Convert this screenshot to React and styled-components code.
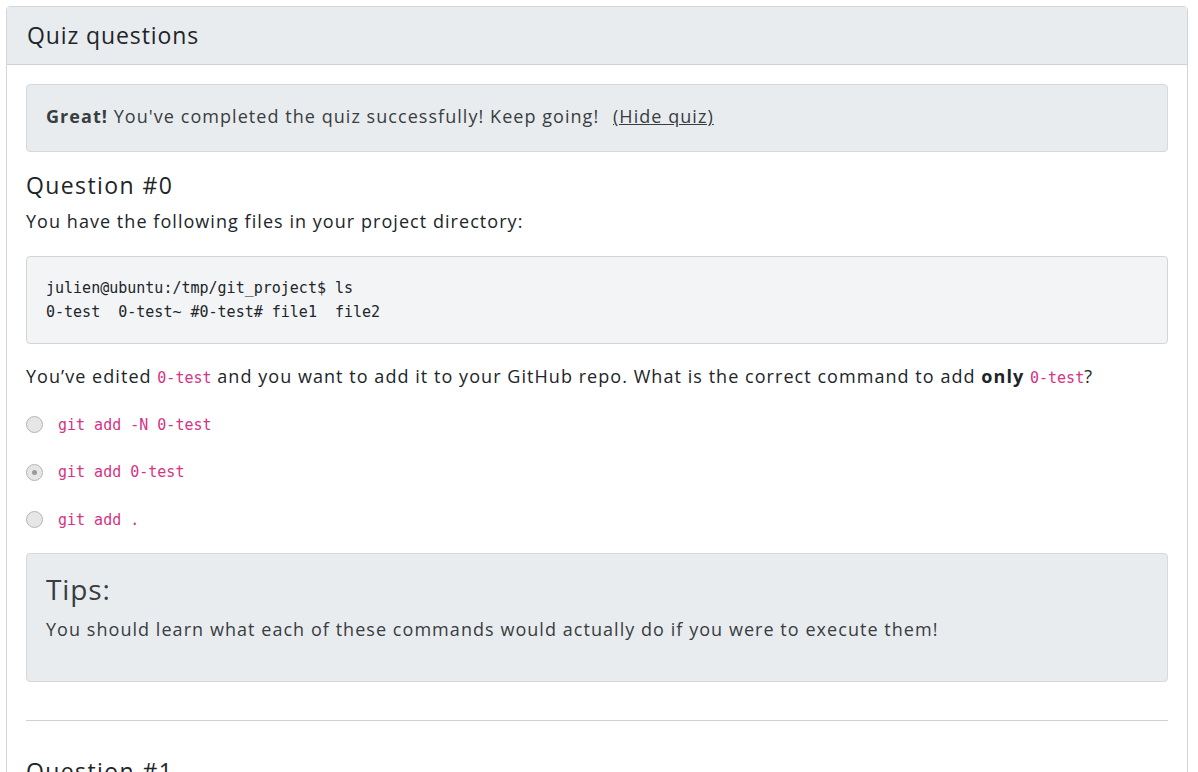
import React from "react";
import styled, { createGlobalStyle } from "styled-components";

const GlobalStyle = createGlobalStyle`
  body {
    margin: 0;
    background: #fff;
    font-family: "Open Sans", "Noto Sans", sans-serif;
    color: #212529;
  }
`;

const answers = [
  { id: 0, text: "git add -N 0-test", checked: false },
  { id: 1, text: "git add 0-test", checked: true },
  { id: 2, text: "git add .", checked: false },
];

function App() {
  return (
    <>
      <GlobalStyle />
      <Page>
        <Card>
          <CardHeader>Quiz questions</CardHeader>
          <CardBody>
            <Alert>
              <strong>Great!</strong> You've completed the quiz successfully! Keep going!{" "}
              <HideLink>(Hide quiz)</HideLink>
            </Alert>

            <QuestionTitle>Question #0</QuestionTitle>
            <Paragraph>You have the following files in your project directory:</Paragraph>
            <Pre>
              {"julien@ubuntu:/tmp/git_project$ ls\n0-test  0-test~ #0-test# file1  file2"}
            </Pre>
            <Paragraph>
              You’ve edited <Code>0-test</Code> and you want to add it to your GitHub repo. What is the
              correct command to add <strong>only</strong> <Code>0-test</Code>?
            </Paragraph>

            <AnswerList>
              {answers.map((a) => (
                <Answer key={a.id}>
                  <Radio checked={a.checked} />
                  <Code>{a.text}</Code>
                </Answer>
              ))}
            </AnswerList>

            <Tips>
              <TipsTitle>Tips:</TipsTitle>
              <TipsText>
                You should learn what each of these commands would actually do if you were to execute them!
              </TipsText>
            </Tips>

            <Divider />

            <QuestionTitle>Question #1</QuestionTitle>
            <Paragraph>Something more to read below.</Paragraph>
          </CardBody>
        </Card>
      </Page>
    </>
  );
}

const Page = styled.div`
  padding: 6px 10px 0 6px;
`;

const Card = styled.div`
  border: 1px solid #d3d5d8;
  border-radius: 4px;
  background: #fff;
`;

const CardHeader = styled.div`
  background: #e9ecef;
  border-bottom: 1px solid #cfd2d5;
  padding: 0 20px 2px;
  height: 55px;
  display: flex;
  align-items: center;
  font-size: 23px;
  font-weight: 500;
  letter-spacing: 0.9px;
  color: #212529;
`;

const CardBody = styled.div`
  padding: 19px 19px 20px 19px;
`;

const Alert = styled.div`
  background: #e9ecef;
  border: 1px solid #d6d8db;
  border-radius: 4px;
  padding: 0 19px 4px;
  height: 62px;
  display: flex;
  align-items: center;
  white-space: pre;
  font-size: 18px;
  letter-spacing: 1.05px;
  color: #383d41;
  strong {
    font-weight: 700;
  }
`;

const HideLink = styled.a`
  margin-left: 8px;
  text-decoration: underline;
  color: #383d41;
  cursor: pointer;
`;

const QuestionTitle = styled.h4`
  margin: 19px 0 8px;
  font-size: 23px;
  font-weight: 500;
  letter-spacing: 1.4px;
  line-height: 28px;
`;

const Paragraph = styled.p`
  margin: 0 0 21px;
  font-size: 18px;
  letter-spacing: 1.05px;
  line-height: 28px;
  strong {
    font-weight: 700;
  }
`;

const Pre = styled.pre`
  margin: 0 0 18px;
  background: #f3f4f6;
  border: 1px solid #d3d5d8;
  border-radius: 4px;
  padding: 19px;
  font-family: "DejaVu Sans Mono", "Liberation Mono", monospace;
  font-size: 15px;
  letter-spacing: 0;
  line-height: 24px;
  color: #212529;
`;

const Code = styled.code`
  font-family: "DejaVu Sans Mono", "Liberation Mono", monospace;
  font-size: 15px;
  letter-spacing: 0;
  color: #d63384;
`;

const AnswerList = styled.div`
  display: flex;
  flex-direction: column;
  margin: -12px 0 9px;
`;

const Answer = styled.label`
  display: flex;
  align-items: center;
  gap: 15px;
  height: 47.5px;
`;

const Radio = styled.span`
  width: 15px;
  height: 15px;
  border-radius: 50%;
  border: 1px solid #b5b5b5;
  background: #e6e6e6;
  display: flex;
  align-items: center;
  justify-content: center;
  &::after {
    content: "";
    width: 5px;
    height: 5px;
    border-radius: 50%;
    background: ${(p) => (p.checked ? "#9a9a9a" : "transparent")};
  }
`;

const Tips = styled.div`
  background: #e9ecef;
  border: 1px solid #d6d8db;
  border-radius: 4px;
  padding: 15px 19px 0;
  height: 129px;
  box-sizing: border-box;
  color: #383d41;
`;

const TipsTitle = styled.h3`
  margin: 0 0 6px;
  font-size: 28px;
  font-weight: 400;
  letter-spacing: 0.9px;
  line-height: 40px;
`;

const TipsText = styled.p`
  margin: 0;
  font-size: 18px;
  letter-spacing: 1.05px;
  line-height: 28px;
`;

const Divider = styled.hr`
  margin: 38px 0 36px;
  border: 0;
  border-top: 1px solid #cfd2d5;
`;

export default App;
